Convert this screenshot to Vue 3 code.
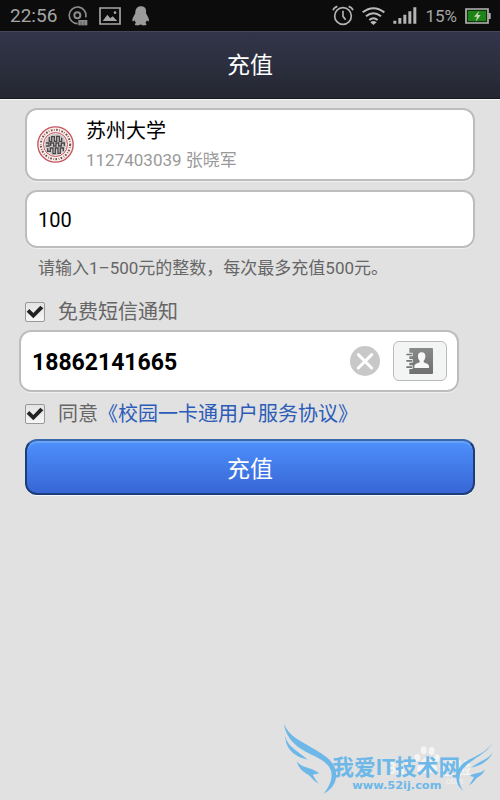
<template>
    <div class="page">
        <!-- Thanh trạng thái -->
        <div class="status-bar">
            <div class="status-group">
                <span class="status-time">22:56</span>
                <svg viewBox="0 0 60 60" width="20" height="20">
                    <path d="M29 53 A25 25 0 1 1 53 34" fill="none" stroke="#8b8b8b" stroke-width="5" />
                    <circle cx="28" cy="28" r="9" fill="none" stroke="#8b8b8b" stroke-width="6" />
                    <path d="M31 42h27v16H31z" fill="#8b8b8b" />
                    <path d="M39 46v12M48 46v12" stroke="#444" stroke-width="2" />
                </svg>
                <svg viewBox="0 0 66 54" width="22" height="18">
                    <path d="M3 3h60v48H3z" fill="none" stroke="#a6a6a6" stroke-width="5" />
                    <path d="M11 42 L25 23 L34 34 L41 28 L55 42z" fill="#a6a6a6" />
                    <circle cx="48" cy="17" r="4" fill="#a6a6a6" />
                </svg>
                <svg viewBox="0 0 54 60" width="18" height="20">
                    <path
                        d="M27 1C16 1 10 9 10 19c0 4-1 5-3 8-4 7-8 16-5 19 2 1 4-2 5-4 1 4 3 6 5 8-4 2-5 8 1 8 5 1 11 0 13-3 2 3 8 4 13 3 6 0 5-6 1-8 2-2 4-4 5-8 1 2 3 5 5 4 3-3-1-12-5-19-2-3-3-4-3-8C44 9 38 1 27 1z"
                        fill="#9b9b9b" />
                </svg>
            </div>
            <div class="status-group right">
                <svg viewBox="0 0 66 63" width="22" height="21">
                    <circle cx="33" cy="33" r="25" fill="none" stroke="#b2b2b2" stroke-width="5" />
                    <path d="M33 17v17l8 10" fill="none" stroke="#b2b2b2" stroke-width="5" />
                    <path d="M3 16 Q6 7 16 4M50 4 Q60 7 63 16" fill="none" stroke="#b2b2b2" stroke-width="5" />
                </svg>
                <svg viewBox="0 0 69 54" width="23" height="18">
                    <g fill="none" stroke="#bababa" stroke-width="6">
                        <path d="M2 16 Q34 -9 67 16" />
                        <path d="M12 28 Q34 10 57 28" />
                        <path d="M22 39 Q34 28 47 39" />
                    </g>
                    <path d="M25 46 Q34 38 44 46 L34 54z" fill="#bababa" />
                </svg>
                <svg viewBox="0 0 72 51" width="24" height="17">
                    <path d="M1 41h9v9H1zM16 33h9v17h-9zM31 23h9v27h-9zM46 13h9v37h-9zM61 1h9v49h-9z" fill="#b4b4b4" />
                </svg>
                <span class="status-battery">15%</span>
                <svg viewBox="0 0 78 48" width="26" height="16">
                    <path d="M3 3h66v42H3z" fill="#14320f" stroke="#b4b4b4" stroke-width="5" />
                    <path d="M9 9h54v30H9z" fill="#1f8417" />
                    <path d="M71 15h6v18h-6z" fill="#b4b4b4" />
                    <path d="M43 8 L27 26h9l-4 15 15-20h-9z" fill="#c5d6bd" />
                </svg>
            </div>
        </div>

        <header class="title-bar">
            <h1>充值</h1>
        </header>

        <form class="recharge-form" @submit.prevent>
            <section class="box account">
                <svg viewBox="0 0 111 111" width="37" height="37">
                    <circle cx="55.5" cy="55.5" r="53" fill="#fbf0ec" stroke="#c4545f" stroke-width="4" />
                    <circle cx="55.5" cy="55.5" r="44" fill="none" stroke="#71514e" stroke-width="6"
                        stroke-dasharray="5 4 2 5" />
                    <circle cx="55.5" cy="55.5" r="36" fill="#f3eeee" stroke="#c4545f" stroke-width="3" />
                    <circle cx="55.5" cy="55.5" r="32" fill="#c9c6c6" />
                    <g fill="none" stroke="#4a4648" stroke-width="4">
                        <path d="M37 33v13h7V32h8v14h7V31h8v15h7V35" />
                        <path d="M27 51h9v9h-9M41 60v-9h9v9h7v-9h8v9h8v-9h9v9" />
                        <path d="M32 67v9h8V66h8v17h7V66h8v16h7V66h9v10" />
                    </g>
                </svg>
                <div class="account-info">
                    <div class="school-name">{{ account.school }}</div>
                    <div class="student">{{ account.studentId }} {{ account.name }}</div>
                </div>
            </section>

            <input v-model="amount" class="box amount" type="text" inputmode="numeric" aria-label="充值" />
            <p class="hint">请输入1–500元的整数，每次最多充值500元。</p>

            <div class="check-row">
                <span class="check">
                    <input id="sms" v-model="smsNotice" type="checkbox" />
                    <svg v-if="smsNotice" viewBox="0 0 60 60" width="20" height="20">
                        <path d="M5 29l8-8 12 12 21-22 9 8-30 30z" fill="#222" />
                    </svg>
                </span>
                <label for="sms">免费短信通知</label>
            </div>

            <div class="box phone">
                <input v-model="phone" type="tel" aria-label="免费短信通知" />
                <button type="button" class="clear-btn" @click="phone = ''">
                    <svg viewBox="0 0 90 90" width="30" height="30">
                        <circle cx="45" cy="45" r="45" fill="#c8c8c8" />
                        <path d="M25 26l40 40M65 26L25 66" stroke="#fff" stroke-width="9" stroke-linecap="round" />
                    </svg>
                </button>
                <button type="button" class="contact-btn">
                    <svg viewBox="0 0 81 78" width="27" height="26">
                        <defs>
                            <linearGradient id="book" x2="0" y2="1">
                                <stop stop-color="#898989" />
                                <stop offset="1" stop-color="#707070" />
                            </linearGradient>
                        </defs>
                        <path d="M10 0h68q3 0 3 3v72q0 3-3 3H10z" fill="url(#book)" />
                        <path d="M0 14h20v11H0zM0 33h20v11H0zM0 52h20v11H0z" fill="#f4f4f4" />
                        <path d="M1 17h17v5H1zM1 36h17v5H1zM1 55h17v5H1z" fill="#777" />
                        <path
                            d="M47 13c-8 0-12 6-11 13 0 6 3 9 5 12v5c-5 3-15 4-16 11v6h44v-6c-1-7-11-8-16-11v-5c2-3 5-6 5-12 1-7-3-13-11-13z"
                            fill="#f8f8f8" />
                    </svg>
                </button>
            </div>

            <div class="check-row">
                <span class="check">
                    <input id="agree" v-model="agreed" type="checkbox" />
                    <svg v-if="agreed" viewBox="0 0 60 60" width="20" height="20">
                        <path d="M5 29l8-8 12 12 21-22 9 8-30 30z" fill="#222" />
                    </svg>
                </span>
                <div class="agree-text">
                    <label for="agree">同意</label><a href="#">《校园一卡通用户服务协议》</a>
                </div>
            </div>

            <button type="submit" class="submit-btn">充值</button>
        </form>

        <footer class="watermark">
            <svg viewBox="0 0 690 270" width="230" height="90">
                <g fill="#f4f4f4">
                    <ellipse cx="461" cy="121" rx="9" ry="12" />
                    <ellipse cx="485" cy="123" rx="9" ry="12" />
                    <ellipse cx="442" cy="143" rx="9" ry="11" />
                    <ellipse cx="501" cy="144" rx="8" ry="11" />
                    <path d="M471 142c-12 0-17 15-25 22-9 10-5 26 11 25h30c15 0 18-15 9-24-9-8-14-23-25-23z" />
                    <text class="mark-back" x="348" y="192">Bai</text>
                    <text class="mark-back" x="506" y="192">经验</text>
                    <text class="mark-small" x="522" y="222">.com</text>
                </g>
                <g fill="#6db8e8">
                    <path d="M42 42C57 80 92 91 128 115C170 139 203 160 198 202C195 229 177 242 161 252C174 233 190 210 183 183C174 151 128 139 95 118C66 100 46 74 42 42z" />
                    <path d="M45 78C53 110 83 123 113 149C78 141 48 122 45 78z" />
                    <path d="M80 154C97 176 120 169 148 190L128 194Q135 207 146 221C127 212 122 196 107 190C93 181 85 171 80 154z" />
                    <path d="M670 94C656 122 636 132 611 149C580 169 563 190 569 220Q572 235 581 242C550 224 556 184 574 165C592 145 650 134 670 94z" />
                    <path d="M669 126C655 149 629 153 603 173C631 167 656 155 669 126z" />
                    <path d="M645 178C632 193 615 187 599 198L612 201Q606 214 597 226C613 218 617 204 625 201C636 195 642 188 645 178z" />
                    <text class="mark-title" x="187" y="196">我爱IT技术网</text>
                    <text class="mark-url" x="247" y="236">www.52ij.com</text>
                </g>
            </svg>
        </footer>
    </div>
</template>

<script setup>
import { ref } from 'vue'

const account = {
    school: '苏州大学',
    studentId: '1127403039',
    name: '张晓军',
}

const amount = ref('100')
const phone = ref('18862141665')
const smsNotice = ref(true)
const agreed = ref(true)
</script>

<style>
body {
    background: #e1e1e1;
}
</style>

<style scoped>
.page {
    min-height: 100vh;
    display: flex;
    flex-direction: column;
    background: #e1e1e1;
    font-family: Roboto, "Noto Sans CJK SC", sans-serif;
}

.page * {
    box-sizing: border-box;
}

svg {
    display: block;
    flex: none;
}

input,
button {
    font-family: inherit;
}

/* Status bar */
.status-bar {
    height: 31px;
    padding: 0 9px 0 10px;
    display: flex;
    justify-content: space-between;
    align-items: center;
    background: #0c0c0c;
    color: #a6a6a6;
}

.status-group {
    display: flex;
    align-items: center;
    gap: 11px;
}

.status-group.right {
    gap: 8px;
}

.status-time {
    font-size: 19px;
}

.status-battery {
    font-size: 17px;
}

.title-bar {
    height: 68px;
    padding-top: 2px;
    display: flex;
    align-items: center;
    justify-content: center;
    background: linear-gradient(#33364a, #242731);
    border-top: 1px solid #44475a;
    border-bottom: 1px solid #15171f;
    box-shadow: 0 1px 0 #f4f4f6;
}

.title-bar h1 {
    margin: 0;
    font-size: 23px;
    font-weight: 400;
    line-height: 32px;
    color: #fff;
}

.recharge-form {
    padding: 9px 25px 0;
    display: flex;
    flex-direction: column;
}

.box {
    background: #fff;
    border: 2px solid #bdbdbd;
    border-radius: 12px;
    box-shadow: 0 1px 0 #f0f0f0;
}

.account {
    height: 73px;
    padding: 0 10px;
    display: flex;
    align-items: center;
    gap: 12px;
}

.school-name {
    font-size: 20px;
    line-height: 30px;
    color: #000;
}

.student {
    font-size: 17px;
    line-height: 28px;
    color: #999;
}

.amount {
    width: 100%;
    height: 58px;
    margin-top: 9px;
    padding: 2px 11px 0;
    font-size: 20px;
    color: #000;
    outline: none;
}

.hint {
    margin: 8px 0 20px;
    padding: 0 13px;
    font-size: 17px;
    line-height: 24px;
    color: #666;
}

.check-row {
    display: flex;
    align-items: center;
    gap: 13px;
    height: 24px;
    font-size: 20px;
    line-height: 24px;
    color: #666;
}

.check {
    display: grid;
}

.check input,
.check svg {
    grid-area: 1 / 1;
}

.check input {
    appearance: none;
    width: 20px;
    height: 20px;
    margin: 0;
    border: 1px solid #999;
    border-radius: 2px;
    background: linear-gradient(#e4e4e4, #f6f6f6);
}

.check svg {
    pointer-events: none;
}

.agree-text a {
    color: #2c5cb8;
    text-decoration: none;
}

.phone {
    height: 62px;
    margin: 6px 16px 10px -6px;
    padding: 0 10px 0 11px;
    display: flex;
    align-items: center;
}

.phone input {
    flex: 1;
    min-width: 0;
    padding: 2px 0 0;
    border: 0;
    outline: none;
    background: none;
    font-size: 23px;
    font-weight: 700;
    color: #000;
}

.clear-btn {
    padding: 0;
    border: 0;
    background: none;
}

.contact-btn {
    width: 54px;
    height: 40px;
    margin-left: 13px;
    padding: 0 0 0 12px;
    border: 1px solid #bbb;
    border-radius: 6px;
    background: #f3f4f4;
}

.submit-btn {
    width: 100%;
    height: 56px;
    margin-top: 13px;
    border: 2px solid #1d3d78;
    border-top-color: #3968ae;
    border-radius: 12px;
    background: linear-gradient(#4d90fc, #3866d5);
    box-shadow: inset 0 2px 0 #67a4f8, 0 1px 0 #f2f6fa;
    font-size: 23px;
    color: #fff;
}

/* Watermark */
.watermark {
    margin-top: auto;
    align-self: flex-end;
}

.mark-back {
    font-size: 48px;
    font-weight: 700;
}

.mark-small {
    font-size: 26px;
}

.mark-title {
    font-size: 65px;
    font-weight: 700;
}

.mark-url {
    font-family: "DejaVu Sans", sans-serif;
    font-size: 34px;
    font-weight: 700;
}
</style>
